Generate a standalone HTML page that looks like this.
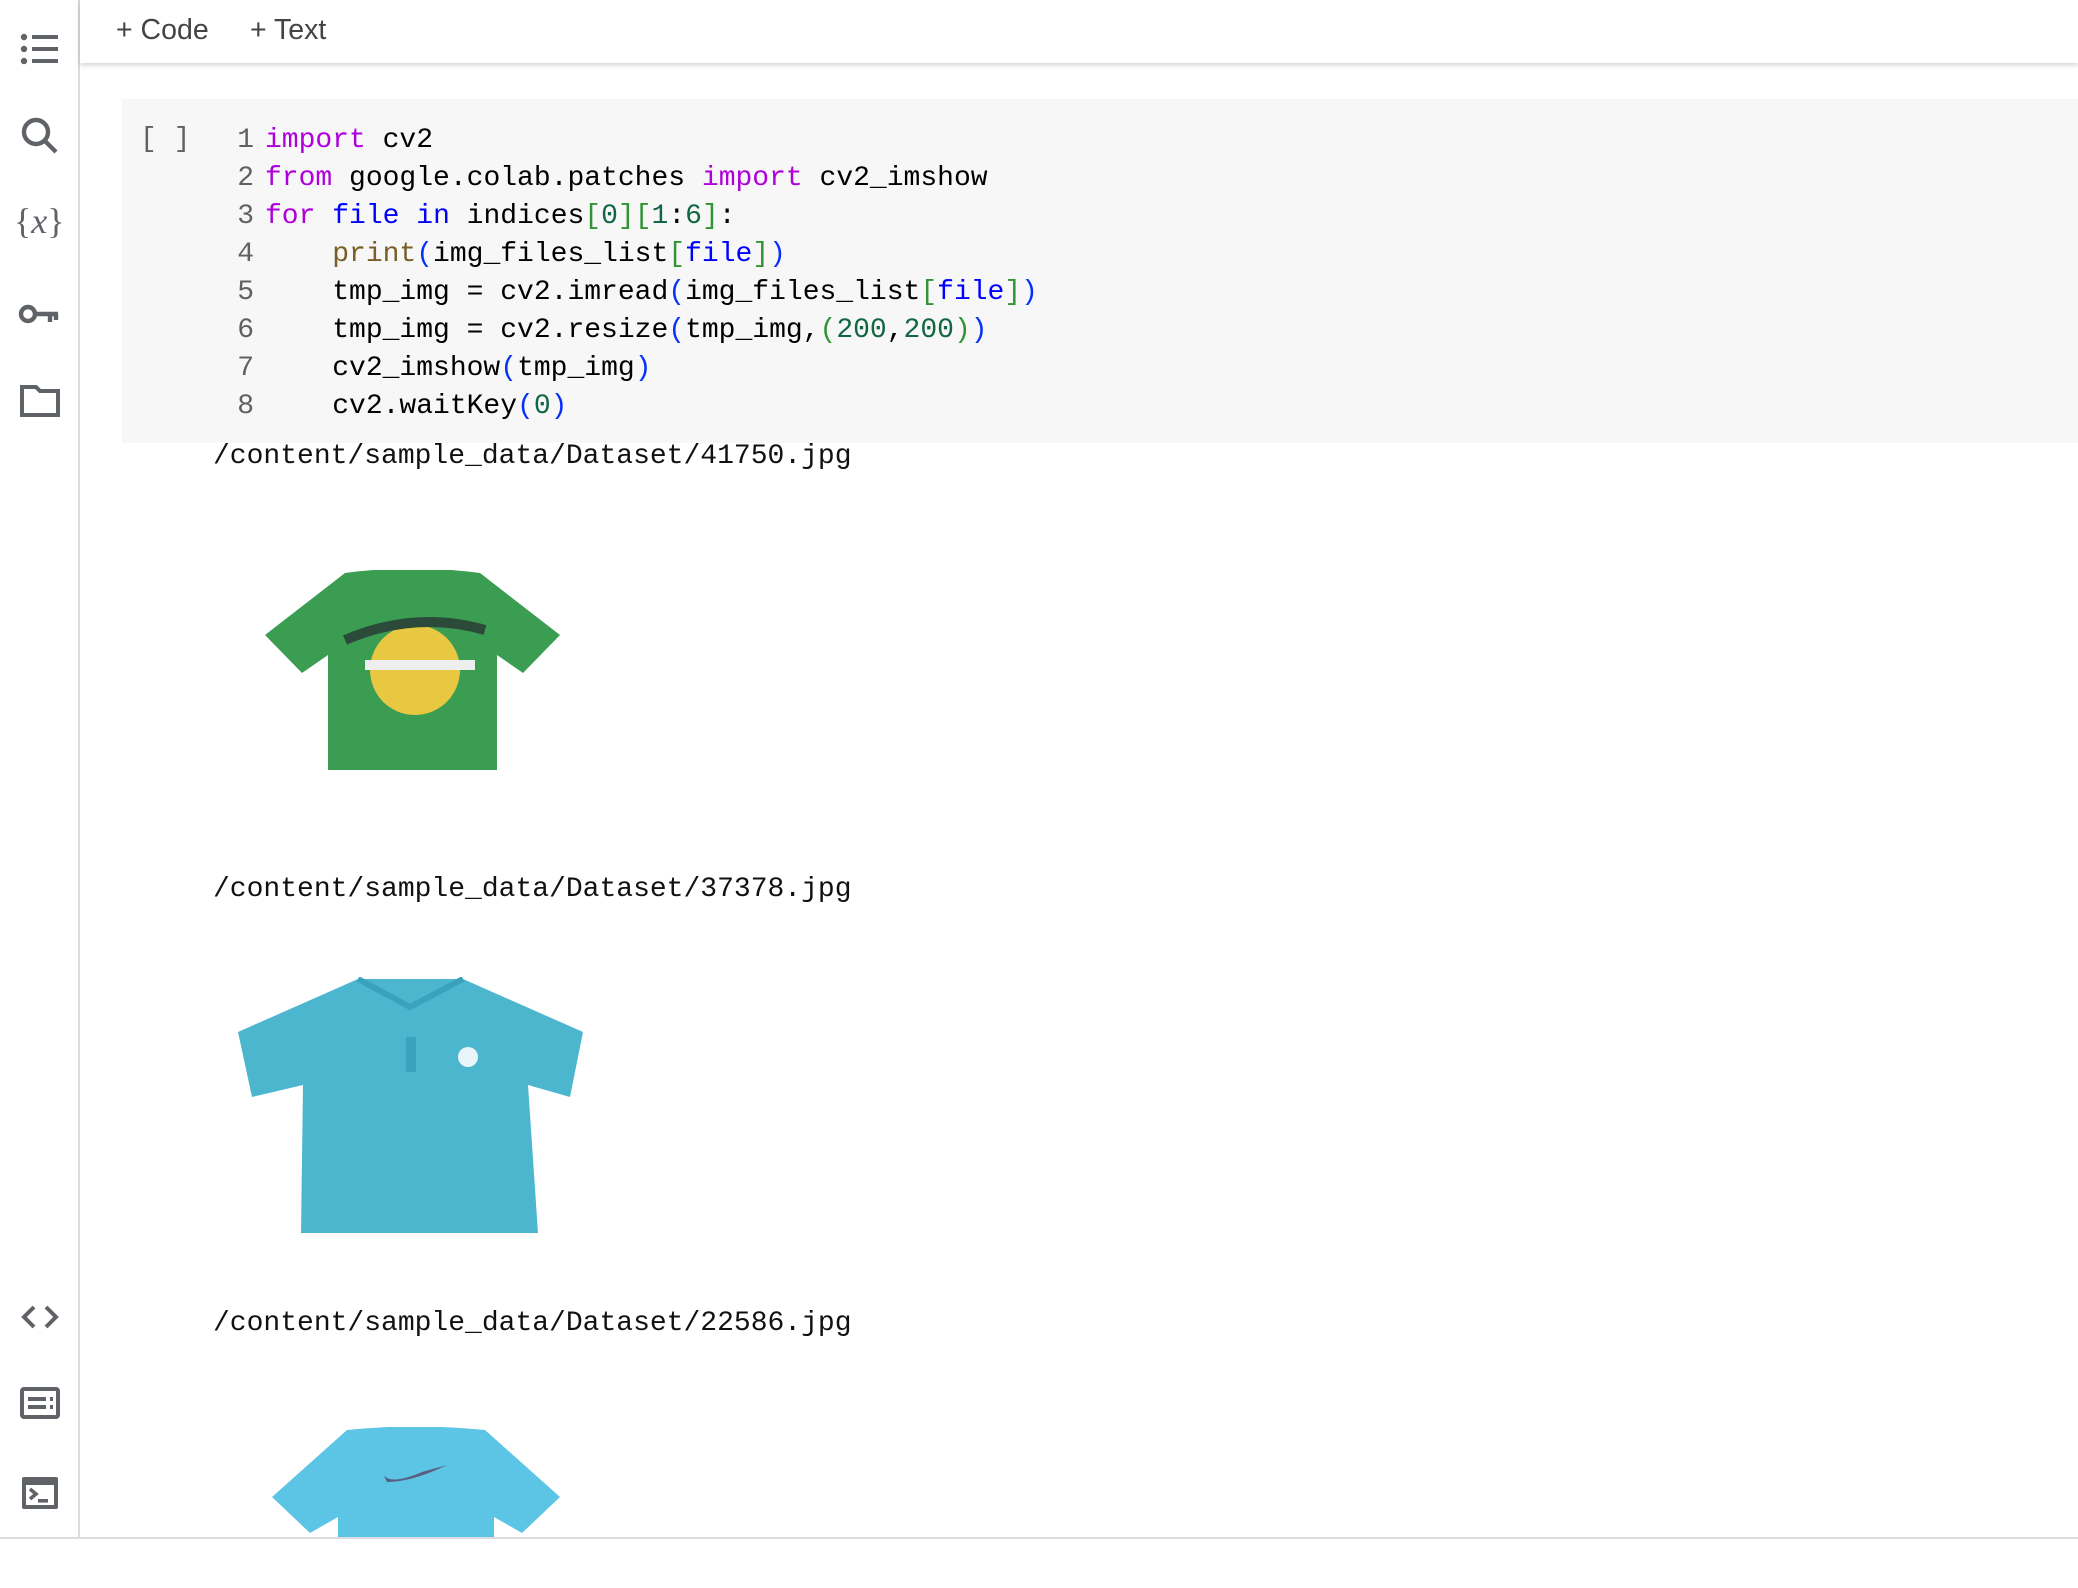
<!DOCTYPE html>
<html><head><meta charset="utf-8"><style>
html,body{margin:0;padding:0;background:#fff;width:2078px;height:1588px;overflow:hidden;position:relative;font-family:"Liberation Sans",sans-serif}
.side{position:absolute;left:0;top:0;width:78px;height:1537px;border-right:2px solid #dadce0;background:#fff}
.ic{position:absolute;left:16px;width:48px;height:48px}
.top{position:absolute;left:80px;top:0;right:0;height:63px;background:#fff;box-shadow:0 2px 5px rgba(0,0,0,.18)}
.tb{position:absolute;top:14px;font-size:28.5px;color:#444}
.cell{position:absolute;left:122px;top:99px;right:0;height:344px;background:#f7f7f7}
.code{position:absolute;font-family:"Liberation Mono",monospace;font-size:28px;line-height:38px;white-space:pre;color:#000}
.ln{position:absolute;left:222px;top:122px;width:32px;text-align:right;color:#616161;font-family:"Liberation Mono",monospace;font-size:28px;line-height:38px}
.k{color:#af00db}.b{color:#0000ff}.f{color:#795e26}.p{color:#0431fa}.g{color:#319331}.n{color:#116644}
.out{position:absolute;left:213px;font-family:"Liberation Mono",monospace;font-size:28px;color:#111}
.bot{position:absolute;left:0;right:0;top:1537px;height:2px;background:#dadce0}
</style></head><body>
<div class="side">
<svg class="ic" style="top:25px" viewBox="0 0 24 24" fill="#5f6368"><circle cx="4" cy="6" r="1.6"/><circle cx="4" cy="12" r="1.6"/><circle cx="4" cy="18" r="1.6"/><rect x="8" y="5" width="13" height="2"/><rect x="8" y="11" width="13" height="2"/><rect x="8" y="17" width="13" height="2"/></svg>
<svg class="ic" style="top:112px" viewBox="0 0 24 24" fill="none" stroke="#5f6368" stroke-width="2.2"><circle cx="10" cy="10" r="6"/><path d="M14.5 14.5L20 20"/></svg>
<div style="position:absolute;left:14px;top:200px;font-family:'Liberation Serif',serif;font-size:36px;color:#5f6368;font-style:normal">{<i>x</i>}</div>
<svg class="ic" style="top:290px" viewBox="0 0 24 24" fill="none" stroke="#5f6368" stroke-width="2.2"><circle cx="6" cy="12" r="3.5"/><path d="M9.5 12H21M17 12v4M20 12v3"/></svg>
<svg class="ic" style="top:377px" viewBox="0 0 24 24" fill="none" stroke="#5f6368" stroke-width="2"><path d="M3 5h7l2 2h9v12H3z"/></svg>
<svg class="ic" style="top:1293px" viewBox="0 0 24 24" fill="none" stroke="#5f6368" stroke-width="2"><path d="M9 7l-5 5 5 5M15 7l5 5-5 5"/></svg>
<svg class="ic" style="top:1379px" viewBox="0 0 24 24" fill="none" stroke="#5f6368" stroke-width="2"><rect x="3" y="5" width="18" height="14" rx="1"/><path d="M6 10h9M6 14h9M17 10h1.5M17 14h1.5"/></svg>
<svg class="ic" style="top:1469px" viewBox="0 0 24 24"><rect x="3" y="4" width="18" height="16" rx="1" fill="#5f6368"/><rect x="5" y="8" width="14" height="10" fill="#fff"/><path d="M7 10l3 2.5-3 2.5" stroke="#5f6368" stroke-width="1.8" fill="none"/><rect x="11" y="15" width="5" height="1.8" fill="#5f6368"/></svg>
</div>
<div class="top"><span class="tb" style="left:36px">+ Code</span><span class="tb" style="left:170px">+ Text</span></div>
<div class="cell"></div>
<div class="code" style="left:140px;top:121px;color:#616161">[ ]</div>
<div class="ln">1<br>2<br>3<br>4<br>5<br>6<br>7<br>8</div>
<div class="code" style="left:265px;top:122px"><span class="k">import</span> cv2
<span class="k">from</span> google.colab.patches <span class="k">import</span> cv2_imshow
<span class="k">for</span> <span class="b">file</span> <span class="b">in</span> indices<span class="g">[</span><span class="n">0</span><span class="g">]</span><span class="g">[</span><span class="n">1</span>:<span class="n">6</span><span class="g">]</span>:
    <span class="f">print</span><span class="p">(</span>img_files_list<span class="g">[</span><span class="b">file</span><span class="g">]</span><span class="p">)</span>
    tmp_img = cv2.imread<span class="p">(</span>img_files_list<span class="g">[</span><span class="b">file</span><span class="g">]</span><span class="p">)</span>
    tmp_img = cv2.resize<span class="p">(</span>tmp_img,<span class="g">(</span><span class="n">200</span>,<span class="n">200</span><span class="g">)</span><span class="p">)</span>
    cv2_imshow<span class="p">(</span>tmp_img<span class="p">)</span>
    cv2.waitKey<span class="p">(</span><span class="n">0</span><span class="p">)</span></div>
<div class="out" style="top:441px">/content/sample_data/Dataset/41750.jpg</div>
<div class="out" style="top:874px">/content/sample_data/Dataset/37378.jpg</div>
<div class="out" style="top:1308px">/content/sample_data/Dataset/22586.jpg</div>
<svg style="position:absolute;left:265px;top:570px" width="295" height="202" viewBox="0 0 295 202">
<path d="M80 3 Q147 -6 215 3 L295 65 L258 103 L232 85 L232 200 L63 200 L63 85 L37 103 L0 65 Z" fill="#3a9d52"/>
<circle cx="150" cy="100" r="45" fill="#e8c840"/>
<path d="M80 70 Q150 40 220 60" stroke="#2c4a3a" stroke-width="10" fill="none"/>
<rect x="100" y="90" width="110" height="10" fill="#eee"/>
</svg>
<svg style="position:absolute;left:238px;top:977px" width="346" height="258" viewBox="0 0 346 258">
<path d="M120 2 L225 2 L345 55 L332 120 L290 108 L300 256 L63 256 L65 108 L14 120 L0 55 Z" fill="#4cb6cf"/>
<path d="M120 2 L172 30 L225 2" stroke="#3aa2bc" stroke-width="6" fill="none"/>
<rect x="168" y="60" width="10" height="35" fill="#3aa2bc"/>
<circle cx="230" cy="80" r="10" fill="#e8f6fa"/>
</svg>
<svg style="position:absolute;left:272px;top:1427px" width="288" height="110" viewBox="0 0 288 110">
<path d="M75 3 Q144 -4 213 3 L288 70 L250 106 L222 90 L222 110 L66 110 L66 90 L38 106 L0 70 Z" fill="#5cc4e4"/>
<path d="M110 45 Q115 60 150 45 L175 38 Q140 55 115 55 Z" fill="#5a5e80"/>
</svg>
<div class="bot"></div>
</body></html>
